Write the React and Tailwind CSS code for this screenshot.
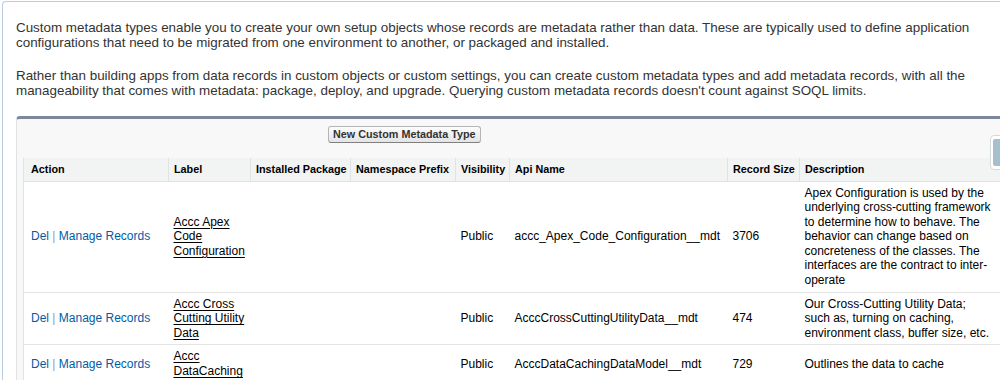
import React from "react";

const rows = [
  {
    label: "Accc Apex Code Configuration",
    api: "accc_Apex_Code_Configuration__mdt",
    size: "3706",
    desc: "Apex Configuration is used by the underlying cross-cutting framework to determine how to behave. The behavior can change based on concreteness of the classes. The interfaces are the contract to inter-operate",
  },
  {
    label: "Accc Cross Cutting Utility Data",
    api: "AcccCrossCuttingUtilityData__mdt",
    size: "474",
    desc: "Our Cross-Cutting Utility Data; such as, turning on caching, environment class, buffer size, etc.",
  },
  {
    label: "Accc DataCaching",
    api: "AcccDataCachingDataModel__mdt",
    size: "729",
    desc: "Outlines the data to cache",
  },
];

const headers = [
  "Action",
  "Label",
  "Installed Package",
  "Namespace Prefix",
  "Visibility",
  "Api Name",
  "Record Size",
  "Description",
];

export default function App() {
  return (
    <div className="relative w-[1000px] h-[380px] overflow-hidden bg-white font-['Liberation_Sans',Arial,sans-serif]">
      <div className="ml-[2px] mt-[1px] w-[1020px] h-[420px] border-l border-t border-[#b8cde0] rounded-tl-[4px] pl-[13px] pt-[18px]">
        <p className="w-[990px] text-[13.4px] leading-[15px] text-[#333]">
          Custom metadata types enable you to create your own setup objects whose records are metadata rather than data. These are typically used to define application configurations that need to be migrated from one environment to another, or packaged and installed.
        </p>
        <p className="mt-[18px] w-[990px] text-[13.4px] leading-[15px] text-[#333]">
          Rather than building apps from data records in custom objects or custom settings, you can create custom metadata types and add metadata records, with all the manageability that comes with metadata: package, deploy, and upgrade. Querying custom metadata records doesn't count against SOQL limits.
        </p>

        <div className="mt-[18px] w-[1000px] border-t-[3px] border-t-[#7d879d] border-l border-l-[#e0e3e5] rounded-tl-[4px] bg-[#f8f8f8] pl-[6px] pt-[7px] pb-4">
          <div className="flex">
            <button className="ml-[305px] h-[17px] px-[4px] flex items-center border border-[#b5b5b5] border-b-[#7f7f7f] rounded-[3px] bg-gradient-to-b from-[#fdfdfd] to-[#e4e4e4] text-[10.8px] font-bold text-[#333] leading-none">
              New Custom Metadata Type
            </button>
          </div>

          <table className="mt-[15px] w-[977px] table-fixed border-collapse bg-white">
            <colgroup>
              <col className="w-[145px]" />
              <col className="w-[82px]" />
              <col className="w-[100px]" />
              <col className="w-[105px]" />
              <col className="w-[54px]" />
              <col className="w-[218px]" />
              <col className="w-[72px]" />
              <col className="w-[201px]" />
            </colgroup>
            <thead>
              <tr className="h-[23px]">
                {headers.map((h, i) => (
                  <th
                    key={h}
                    className={`bg-[#f2f3f3] text-left align-middle text-[10.8px] font-bold text-black whitespace-nowrap border-b border-[#e0e3e5] ${
                      i === 0 ? "pl-[7px] border-l" : "pl-[5px] border-l"
                    }`}
                  >
                    {h}
                  </th>
                ))}
              </tr>
            </thead>
            <tbody className="text-[12px] leading-[14.6px] text-black">
              {rows.map((r) => (
                <tr key={r.api}>
                  <td className="pl-[7px] py-[4px] align-middle border-b border-l border-[#e3e3e3] whitespace-nowrap">
                    <span className="text-[#015ba7]">Del</span>
                    <span className="text-[#999]"> | </span>
                    <span className="text-[#015ba7]">Manage Records</span>
                  </td>
                  <td className="pl-[5px] pr-[2px] py-[4px] align-middle border-b border-[#e3e3e3]">
                    <span className="underline decoration-1 underline-offset-[2px]">{r.label}</span>
                  </td>
                  <td className="py-[4px] border-b border-[#e3e3e3]"></td>
                  <td className="py-[4px] border-b border-[#e3e3e3]"></td>
                  <td className="pl-[5px] py-[4px] align-middle border-b border-[#e3e3e3]">Public</td>
                  <td className="pl-[5px] py-[4px] align-middle border-b border-[#e3e3e3] whitespace-nowrap">{r.api}</td>
                  <td className="pl-[5px] py-[4px] align-middle border-b border-[#e3e3e3]">{r.size}</td>
                  <td className="pl-[5px] pr-[7px] py-[4px] align-middle border-b border-r border-[#e3e3e3]">{r.desc}</td>
                </tr>
              ))}
            </tbody>
          </table>
        </div>
      </div>

      <div className="absolute left-[990px] top-[135px] w-[14px] h-[35px] rounded-[4px] border border-[#d5dadd] bg-white pl-[2px] pt-[3px]">
        <div className="w-full h-[27px] rounded-l-[2px] bg-[#a7bfcc]" />
      </div>
    </div>
  );
}
